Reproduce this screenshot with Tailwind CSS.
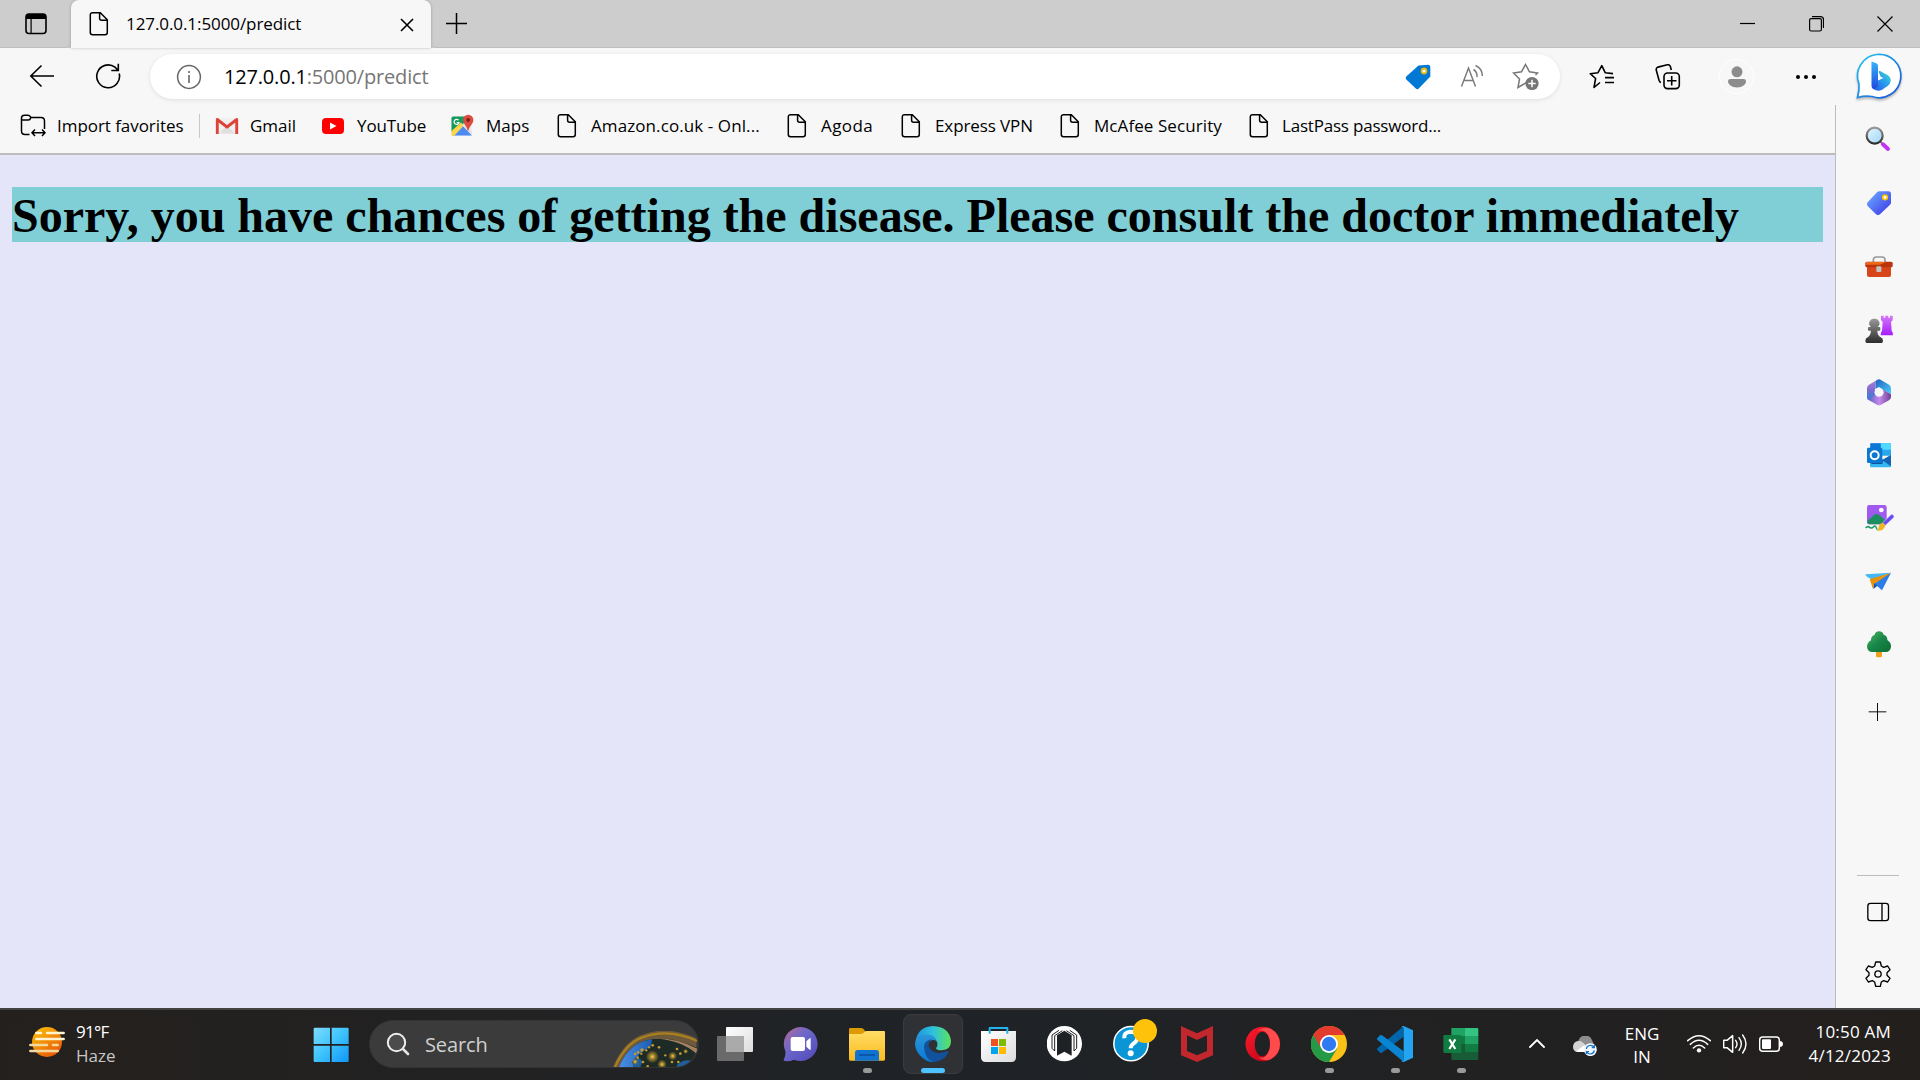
<!DOCTYPE html>
<html lang="en">
<head>
<meta charset="utf-8">
<title>127.0.0.1:5000/predict</title>
<script src="https://cdn.jsdelivr.net/npm/@tailwindcss/browser@4"></script>
</head>
<body class="w-[1920px] h-[1080px] overflow-hidden bg-[#f7f7f7] font-['Open_Sans',sans-serif] text-[17px] text-black flex flex-col whitespace-nowrap">

<svg class="hidden">
  <symbol id="file" viewBox="0 0 24 26"><path d="M5.500 1.700h7.800l7 7v12.800a2.200 2.200 0 0 1-2.200 2.200H5.500a2.200 2.200 0 0 1-2.200-2.200V3.900a2.200 2.200 0 0 1 2.200-2.200zM12.600 1.900v5.300a2 2 0 0 0 2 2h5.500" fill="none" stroke="#000" stroke-width="1.500"/></symbol>
</svg>

<!-- Title bar -->
<header class="h-12 shrink-0 bg-[#cdcdcd] flex">
  <div class="w-[71px] flex items-center justify-center border-b border-[#bdbdbd] rounded-br-md">
    <svg width="22" height="22" viewBox="0 0 22 22"><rect x="1" y="1" width="20" height="19.500" rx="3" fill="none" stroke="#000" stroke-width="1.600"/><path d="M1 6V4a3 3 0 0 1 3-3h14a3 3 0 0 1 3 3v2zM5.500 6v14h1.200V6z"/></svg>
  </div>
  <div class="w-[360px] bg-[#f7f7f7] rounded-t-lg flex items-center shadow-[0_0_3px_rgba(0,0,0,0.25)]">
    <svg class="ml-4 shrink-0" width="24" height="26"><use href="#file"/></svg>
    <span class="ml-[15px] w-[273px] tracking-[-0.08px]">127.0.0.1:5000/predict</span>
    <svg width="16" height="16" viewBox="0 0 16 16"><path d="M2 3l12 12M14 3L2 15" stroke="#000" stroke-width="1.600"/></svg>
  </div>
  <div class="flex-1 flex items-center border-b border-[#bdbdbd] rounded-bl-md">
    <svg class="ml-[15px]" width="21" height="21" viewBox="0 0 21 21"><path d="M10.500 0v21M0 10.500h21" stroke="#000" stroke-width="1.500"/></svg>
    <div class="flex-1"></div>
    <svg class="mr-[54px]" width="15" height="15"><path d="M0 7.500h15" stroke="#000" stroke-width="1.200"/></svg>
    <svg class="mr-[53px]" width="15" height="16" viewBox="0 0 15 16"><rect x=".6" y="2.600" width="11.800" height="12.400" rx="1.500" fill="none" stroke="#000" stroke-width="1.200"/><path d="M3 .7h8.500a3 3 0 0 1 3 3V12" fill="none" stroke="#000" stroke-width="1.200"/></svg>
    <svg class="mr-[27px]" width="16" height="16"><path d="M.5.500l15 15M15.500.500l-15 15" stroke="#000" stroke-width="1.200"/></svg>
  </div>
</header>

<!-- Toolbar -->
<nav class="h-[57px] shrink-0 flex items-start pt-1.5">
  <div class="h-[43px] w-[150px] flex items-center pl-[29px] gap-10">
    <svg width="26" height="24" viewBox="0 0 26 24"><path d="M25 12H2M12.500 1.500L1.800 12l10.700 10.500" fill="none" stroke="#000" stroke-width="1.600"/></svg>
    <svg width="26" height="26" viewBox="0 0 26 26"><path d="M24.200 10.500A11.400 11.400 0 1 1 20 4.200l3 3M23.300.8v6.700h-7" fill="none" stroke="#000" stroke-width="1.600"/></svg>
  </div>
  <div class="w-[1410px] h-[45px] rounded-full bg-white flex items-center shadow-[0_1px_4px_rgba(0,0,0,0.10)]">
    <svg class="ml-[26px]" width="26" height="26" viewBox="0 0 26 26"><circle cx="13" cy="13" r="11.400" fill="none" stroke="#666" stroke-width="1.500"/><path d="M13 11v8M13 7v2" stroke="#666" stroke-width="1.600"/></svg>
    <div class="ml-[22px] text-[20px] tracking-[-0.18px]"><span>127.0.0.1</span><span class="text-[#767676]">:5000/predict</span></div>
    <div class="flex-1"></div>
    <svg class="mr-[29px]" width="26" height="26" viewBox="0 0 26 26"><path d="M13.500 1.500L23 .8q2.300 0 2.300 2.200v9.500L13.800 24.500q-1.500 1.300-3 0L1.300 15.500q-1.300-1.500 0-3z" fill="#0078d4"/><circle cx="19" cy="7" r="2.500" fill="#fff" stroke="#e8b50c" stroke-width="1.800"/></svg>
    <svg class="mr-[26px]" width="26" height="26" viewBox="0 0 26 26"><path d="M1.500 22.500L8.500 4l7 18.500M4 16.500h9M13.500 5.500q4 2.500 3.500 7.500M15.500 1.500q7 3 6.800 10.500" fill="none" stroke="#7b7b7b" stroke-width="1.500"/></svg>
    <svg class="mr-[20px]" width="28" height="28" viewBox="0 0 28 28"><path d="M14.500 19.500L6 24.500l1.500-8.500L1.500 10l8-1.200L13.500 1.500l4 7.300 8 1.200-2 2" fill="none" stroke="#767676" stroke-width="1.500"/><circle cx="20" cy="20.500" r="6.600" fill="#767676"/><path d="M20 16.800v7.400M16.300 20.500h7.400" stroke="#fff" stroke-width="1.500"/></svg>
  </div>
  <div class="h-[45px] flex items-center pl-[29px]">
    <svg width="26" height="26" viewBox="0 0 26 26"><path d="M11 18.500L5 23.500l1.600-9L1.200 9.700l7.800-1L12.800 1.700l3.400 7L24 9.600M16 13.600h9M16 18.500h9" fill="none" stroke="#000" stroke-width="1.600" stroke-linejoin="round"/></svg>
    <svg class="ml-[40px]" width="26" height="26" viewBox="0 0 26 26"><rect x="9" y="9" width="15.300" height="15.600" rx="3.500" fill="none" stroke="#000" stroke-width="1.600"/><path d="M16.700 12v9.500M12 16.700h9.500M6 18.500q-1.300-.3-1.900-2L1.300 6.300Q.8 3.800 3 3.100l9.300-2.300q2.200-.4 3 1.500l1 3.700" fill="none" stroke="#000" stroke-width="1.600"/></svg>
    <div class="ml-[38px] size-[35px] rounded-full border border-white flex items-center justify-center">
      <svg width="20" height="22" viewBox="0 0 20 22"><circle cx="10" cy="5.800" r="5.500" fill="#8c8c8c"/><path d="M3.500 13h13q2.500 0 2.500 2.300c0 3-3.500 6.200-9 6.200s-9-3.200-9-6.200Q1 13 3.500 13z" fill="#8c8c8c"/></svg>
    </div>
    <svg class="ml-[41px]" width="22" height="6" viewBox="0 0 22 6"><circle cx="3" cy="3" r="2"/><circle cx="11" cy="3" r="2"/><circle cx="19" cy="3" r="2"/></svg>
    <svg class="ml-[39px] mb-0.5 overflow-visible drop-shadow-[0_2px_1px_rgba(0,0,0,0.25)]" width="46" height="46" viewBox="0 0 46 46">
      <defs><linearGradient id="b1" x1="0" y1="0" x2="1" y2="1"><stop offset="0" stop-color="#21c8ee"/><stop offset="1" stop-color="#1b50d8"/></linearGradient><linearGradient id="b2" x1="0" y1="0" x2="0" y2="1"><stop offset="0" stop-color="#35b5f8"/><stop offset="1" stop-color="#1d45dd"/></linearGradient><linearGradient id="b3" x1="0" y1="1" x2="1" y2="0"><stop offset="0" stop-color="#2354e8"/><stop offset=".6" stop-color="#2aa5ee"/><stop offset="1" stop-color="#4be0c0"/></linearGradient></defs>
      <path d="M1.500 44.500Q3.500 37 3 31A21.700 21.700 0 1 1 16 43.500Q9 42.500 1.500 44.500z" fill="#fff" stroke="url(#b1)" stroke-width="1.700"/>
      <path d="M16.500 35V30l11-5-2.800-1.200-2-4.800q-.3-1.500 1.300-.9l7.500 4q3.500 2 3.200 6-.4 3-3 5l-6 3.800q-5.200 2.300-9.200-1.900z" fill="url(#b3)"/>
      <path d="M15.500 8.500l4.800 1.700q1.700.6 1.700 2.500v20l-4 3.800q-2.500-.8-2.500-3.500z" fill="url(#b2)"/>
    </svg>
  </div>
</nav>

<div class="h-[903px] shrink-0 flex">
  <main class="w-[1835px] flex flex-col">
    <!-- Favorites bar -->
    <div class="h-[50px] shrink-0 border-b-2 border-[#bcbcbc] flex items-center pl-5 pb-1.5">
      <div class="flex items-center w-[179px]">
        <svg class="mr-[11px]" width="26" height="26" viewBox="0 0 26 26"><path d="M9.500 21.500H5q-3.500 0-3.500-3.500V5q0-2.800 3-2.800h3.500q1.500 0 2.200 1.300L11 4.500h10q3.500 0 3.500 3.500v8M1.500 7h6.700q2 0 2.500-2M15 16.500l-3 3.300 3 3.300M22 16.500l3 3.300-3 3.300M12 19.800h13" fill="none" stroke="#000" stroke-width="1.500"/></svg>
        <span class="tracking-[-0.05px]">Import favorites</span>
      </div>
      <div class="w-4 h-6 border-l border-[#c8c8c8]"></div>
      <div class="flex items-center gap-[11px] w-[106px]">
        <svg width="24" height="24" viewBox="0 0 24 24"><path d="M3 4h18v16H3z" fill="#f0f0f0"/><path d="M4 19.500L12 11l8 8.500z" fill="#e0e0e0"/><path d="M2.300 20V5.500L12 13l9.700-7.500V20" fill="none" stroke="#db4437" stroke-width="2.900" stroke-linejoin="round"/></svg>
        <span>Gmail</span></div>
      <div class="flex items-center gap-3 w-[129px]">
        <svg width="24" height="24" viewBox="0 0 24 24"><rect x="1" y="4" width="22" height="16" rx="4" fill="#f00"/><path d="M9 8.500v7l6.500-3.500z" fill="#fff"/></svg>
        <span class="tracking-[-0.1px]">YouTube</span></div>
      <div class="flex items-center gap-3 w-[105px]">
        <svg width="24" height="24" viewBox="0 0 24 24"><rect x="1.500" y="2.500" width="20" height="19.500" rx="1.500" fill="#e8eaed"/><path d="M1.500 18V4q0-1.500 1.500-1.500h12v6z" fill="#149a5b"/><path d="M2 21.500L12 11l10 10.500z" fill="#4a8af4"/><path d="M1.500 17L11 8.500l3 3L4 22H3q-1.500 0-1.500-1.500z" fill="#fdd44a"/><path d="M12 11l3-2 7 9v3.500z" fill="#dfe1e5"/><path d="M18 17.500q-1-4.500-3.500-7.500Q13 8 13 6a5.200 5.200 0 0 1 10.400 0q0 2-1.500 4-2.900 3.500-3.900 7.500z" fill="#dd4b3e"/><circle cx="18.200" cy="6" r="1.900" fill="#7b2019"/><path d="M8.500 6.200A2.500 2.500 0 1 0 9 8.500H6.700" fill="none" stroke="#fff" stroke-width="1.200"/></svg>
        <span>Maps</span></div>
      <div class="flex items-center gap-3 w-[230px]"><svg width="24" height="26"><use href="#file"/></svg><span class="tracking-[0.09px]">Amazon.co.uk - Onl...</span></div>
      <div class="flex items-center gap-3 w-[114px]"><svg width="24" height="26"><use href="#file"/></svg><span class="tracking-[0.4px]">Agoda</span></div>
      <div class="flex items-center gap-3 w-[159px]"><svg width="24" height="26"><use href="#file"/></svg><span class="tracking-[-0.1px]">Express VPN</span></div>
      <div class="flex items-center gap-3 w-[189px]"><svg width="24" height="26"><use href="#file"/></svg><span class="tracking-[0.08px]">McAfee Security</span></div>
      <div class="flex items-center gap-[11px]"><svg width="24" height="26"><use href="#file"/></svg><span class="tracking-[-0.2px]">LastPass password...</span></div>
    </div>
    <!-- Page content -->
    <section class="flex-1 bg-[#e5e5fa] px-3 pt-8">
      <h1 class="h-[55px] bg-[#80ced6] font-['Liberation_Serif',serif] font-bold text-[48px] leading-[57px]">Sorry, you have chances of getting the disease. Please consult the doctor immediately</h1>
    </section>
  </main>

  <!-- Sidebar -->
  <aside class="w-[85px] border-l border-[#bcbcbc] pt-0.5 flex flex-col items-center">
    <svg width="0" height="0" class="absolute"><defs>
      <linearGradient id="s1" x1="0" y1="0" x2="1" y2="1"><stop offset="0" stop-color="#6eb4ff"/><stop offset="1" stop-color="#3a30e8"/></linearGradient>
      <linearGradient id="s2" x1="0" y1="0" x2="0" y2="1"><stop offset="0" stop-color="#d478f5"/><stop offset="1" stop-color="#a61cff"/></linearGradient>
      <linearGradient id="s3" x1="0" y1="0" x2="0" y2="1"><stop offset="0" stop-color="#999"/><stop offset="1" stop-color="#2c2c2c"/></linearGradient>
      <linearGradient id="s4" x1="0" y1="0" x2="1" y2="1"><stop offset="0" stop-color="#e9f6ff"/><stop offset="1" stop-color="#9ad4f5"/></linearGradient>
      <linearGradient id="s5" x1="0" y1="0" x2="1" y2="1"><stop offset="0" stop-color="#4db85a"/><stop offset=".5" stop-color="#18864a"/><stop offset="1" stop-color="#0c6e30"/></linearGradient>
      <linearGradient id="s6" x1="0" y1="0" x2="0" y2="1"><stop offset="0" stop-color="#b57bd8"/><stop offset=".5" stop-color="#7d6bd0"/><stop offset="1" stop-color="#2b82d8"/></linearGradient>
      <linearGradient id="s7" x1="0" y1="0" x2="1" y2="1"><stop offset="0" stop-color="#1e5fc0"/><stop offset="1" stop-color="#4fd0fa"/></linearGradient>
      <linearGradient id="s8" x1="0" y1="0" x2="1" y2="0"><stop offset="0" stop-color="#5c62c4"/><stop offset=".5" stop-color="#c58bea"/><stop offset="1" stop-color="#6d3f96"/></linearGradient>
    </defs></svg>
    <div class="h-[63px] flex items-center"><svg class="overflow-visible" width="30" height="30" viewBox="129 72 90 90"><path d="M181 125l8 8" stroke="#777" stroke-width="6"/><path d="M189 133l15 14" stroke="#c233f5" stroke-width="12" stroke-linecap="round"/><circle cx="164" cy="107" r="24" fill="url(#s4)" stroke="url(#s3)" stroke-width="6.500"/></svg></div>
    <div class="h-[63px] flex items-center"><svg class="overflow-visible" width="30" height="30" viewBox="129 260 90 90"><path d="M178 273h27q8 0 8 8v26q0 3-3 6l-30 29q-6 5-12 0l-25-25q-5-6 0-11l28-30q3-3 7-3z" fill="url(#s1)"/><circle cx="195" cy="291" r="7" fill="#fff" stroke="#f5c400" stroke-width="5"/></svg></div>
    <div class="h-[63px] flex items-center"><svg class="overflow-visible" width="30" height="30" viewBox="129 449 90 90"><path d="M160 488v-9q0-9 9-9h17q9 0 9 9v9" fill="none" stroke="#999" stroke-width="5"/><path d="M141 495h72v29q0 6-6 6h-60q-6 0-6-6z" fill="#d9451a"/><path d="M141 484h72q5 0 5 5v8q0 4-5 4h-72q-5 0-5-4v-8q0-5 5-5z" fill="#b9340c"/><path d="M139 485h60l-20 8h-42z" fill="#ef6a18"/><rect x="169" y="498" width="15" height="17" rx="3" fill="#c3c3c3"/></svg></div>
    <div class="h-[63px] flex items-center"><svg class="overflow-visible" width="30" height="30" viewBox="129 638 90 90"><path d="M183 646h8v6h5v-6h9v6h5v-6h8v14l-5 4 2 27q4 3 4 14h-37q0-11 4-14l2-27-5-4z" fill="url(#s2)"/><path d="M163 655a14 14 0 0 1 10 25h6q2 0 2 3v5q0 3-3 3h-6q0 14 10 20 7 2 7 10 0 7-5 7h-43q-5 0-5-7 0-8 7-10 9-6 10-20h-6q-3 0-3-3v-5q0-3 3-3h6a14 14 0 0 1 10-25z" fill="url(#s3)"/></svg></div>
    <div class="h-[63px] flex items-center"><svg class="overflow-visible" width="30" height="30" viewBox="129 827 90 90"><path d="M171 839l-24 14q-6 4-6 11v28q0 4 3 7l24-14-3-15V846z" fill="url(#s6)"/><path d="M171 839q6-4 12 0l24 14q6 4 6 11v18l-24-13-12-9-11 6v-20q0-5 5-7z" fill="url(#s7)"/><path d="M189 868l24 14v8q0 6-6 10l-24 13q-6 3-12 0l-24-13-3-3 22-13 11 4 13-8z" fill="url(#s8)"/><circle cx="177" cy="876" r="13.500" fill="#f7f7f7"/></svg></div>
    <div class="h-[63px] flex items-center"><svg class="overflow-visible" width="30" height="30" viewBox="129 56 90 90"><path d="M154 69h56q3 0 3 3v34h-62V72q0-3 3-3z" fill="#28a8ea"/><path d="M182 69h28q3 0 3 3v16h-31z" fill="#50d9ff"/><path d="M151 69h31v19h-31z" fill="#0f78d4"/><path d="M150 104l32 20 31-20v34q0 3-3 3h-57q-3 0-3-3z" fill="#35b8f1"/><path d="M213 104v34l-27-19z" fill="#1464b4"/><path d="M190 119l-36-20v32h33z" fill="#13509a"/><rect x="141" y="82" width="46" height="46" rx="4" fill="#0a78d2"/><circle cx="164" cy="105" r="12" fill="none" stroke="#fff" stroke-width="6"/></svg></div>
    <div class="h-[63px] flex items-center"><svg class="overflow-visible" width="30" height="30" viewBox="129 245 90 90"><path d="M147 254h46q7 0 7 7v45q0 6-7 6h-46q-6 0-6-6v-45q0-7 6-7z" fill="#a05af0"/><path d="M142 302l20-18q8-6 16 0l20 17q-4 11-10 11h-41q-5-2-5-10z" fill="#1c8f60"/><circle cx="184" cy="269" r="7" fill="#fff"/><path d="M137 323q6-7 12-2t12-2 10 9" fill="none" stroke="#1c9a68" stroke-width="4.500"/><path d="M187 308l25-24q4-4 8 0t1 8l-26 24z" fill="#6a4bf2" stroke="#f7f7f7" stroke-width="1.500"/><path d="M170 331q6-4 6-12 3-12 13-11 9 3 5 13-7 13-24 10z" fill="#f0b429"/></svg></div>
    <div class="h-[63px] flex items-center"><svg class="overflow-visible" width="30" height="30" viewBox="129 434 90 90"><path d="M213 457l-27 53-15-13-10 8-5-20z" fill="#2d7de8"/><path d="M213 457l-77 5q1 8 22 16z" fill="#45b8f5"/><path d="M213 457l-64 20 10 29 5-16z" fill="#e8930c"/><path d="M163 488l-2 17 10-9z" fill="#1b4fb5"/></svg></div>
    <div class="h-[63px] flex items-center"><svg class="overflow-visible" width="30" height="30" viewBox="129 623 90 90"><path d="M168 690h18v16q0 5-5 5h-8q-5 0-5-5z" fill="#f0a01c"/><path d="M177 633q10 0 14 10 12 4 11 16 12 8 11 20-2 16-16 16h-40q-15-1-16-16 0-12 12-19-1-12 11-17 3-10 13-10z" fill="url(#s5)"/></svg></div>
    <div class="h-[75px] flex items-center"><svg width="30" height="30" viewBox="129 831 90 90"><path d="M172.500 849v54M146 875.500h53" stroke="#111" stroke-width="3"/></svg></div>
    <div class="mt-auto w-[42px] h-px bg-[#bcbcbc] shrink-0"></div>
    <div class="h-[67px] pt-1 flex items-center shrink-0"><svg width="30" height="30" viewBox="129 166 90 90"><rect x="143.500" y="185" width="62" height="52" rx="8" fill="none" stroke="#000" stroke-width="4"/><path d="M186 185v52" stroke="#000" stroke-width="4"/></svg></div>
    <div class="h-[65px] flex items-start pt-4 shrink-0"><svg width="30" height="30" viewBox="129 355 90 90"><path d="M167 364h14l3 12 7 4 12-4 7 11-9 9v8l9 9-7 11-12-4-7 4-3 13h-14l-3-13-7-4-12 4-7-11 9-9v-8l-9-9 7-11 12 4 7-4z" fill="none" stroke="#000" stroke-width="4" stroke-linejoin="round"/><circle cx="174" cy="400" r="9.500" fill="none" stroke="#000" stroke-width="4"/></svg></div>
  </aside>
</div>

<!-- Taskbar -->
<footer class="h-[72px] shrink-0 border-t-2 border-[#434343] bg-linear-to-r from-[#24201d] via-[#1f2327] to-[#231f1d] flex text-white">
  <svg width="0" height="0" class="absolute"><defs>
    <linearGradient id="t1" x1="0" y1="0" x2=".7" y2="1"><stop offset="0" stop-color="#fbc70a"/><stop offset="1" stop-color="#ea5a05"/></linearGradient>
    <linearGradient id="t2" gradientUnits="userSpaceOnUse" x1="942" y1="83" x2="1047" y2="186"><stop offset="0" stop-color="#7fdcff"/><stop offset=".5" stop-color="#3dc3fb"/><stop offset="1" stop-color="#1095f8"/></linearGradient>
    <linearGradient id="t3" x1="0" y1="0" x2="1" y2="1"><stop offset="0" stop-color="#b7688f"/><stop offset=".4" stop-color="#6d68ca"/><stop offset="1" stop-color="#5048b8"/></linearGradient>
    <linearGradient id="t4" x1="0" y1="0" x2="0" y2="1"><stop offset="0" stop-color="#ffdd66"/><stop offset="1" stop-color="#fbbb20"/></linearGradient>
    <linearGradient id="t5" x1="0" y1="0" x2="1" y2="0"><stop offset="0" stop-color="#1b95dd"/><stop offset=".5" stop-color="#2fc2dd"/><stop offset="1" stop-color="#5be35a"/></linearGradient>
    <linearGradient id="t6" x1="0" y1="0" x2="0" y2="1"><stop offset="0" stop-color="#2a96d8"/><stop offset="1" stop-color="#0a78d8"/></linearGradient>
    <linearGradient id="t7" x1="0" y1="0" x2="1" y2="1"><stop offset="0" stop-color="#ff1b2d"/><stop offset="1" stop-color="#b00012"/></linearGradient>
    <linearGradient id="t8" x1="0" y1="0" x2="1" y2="1"><stop offset="0" stop-color="#fff"/><stop offset="1" stop-color="#dcdcdc"/></linearGradient>
    <linearGradient id="t9" x1="0" y1="0" x2="1" y2="0"><stop offset="0" stop-color="#4a8fe8"/><stop offset="1" stop-color="#1c5cae"/></linearGradient>
    <radialGradient id="ta"><stop offset="0" stop-color="#ffd24a"/><stop offset="1" stop-color="#8a6a18" stop-opacity="0.300"/></radialGradient>
  </defs></svg>
  <div class="w-[298px] flex pl-[29px]">
    <svg class="mt-4" width="36" height="32" viewBox="87 78 108 96"><circle cx="141" cy="126" r="45" fill="url(#t1)"/><path d="M109 99h14M141 99h50M109 117h82" stroke="#fff3d0" stroke-width="7.500" stroke-linecap="round"/><path d="M91 135h50M159 135h14M91 153h82" stroke="#f3d9a0" stroke-width="7.500" stroke-linecap="round"/></svg>
    <div class="ml-[11px] pt-2.5 leading-6"><div class="tracking-[-0.7px]">91°F</div><div class="text-[#c8c6c5]">Haze</div></div>
  </div>
  <div class="w-[66px] pt-4 flex justify-center"><svg width="36" height="36" viewBox="940 78 108 108"><path d="M945 83h46v49h-49V86q0-3 3-3zM996 83h48q3 0 3 3v46h-51zM942 137h49v49h-46q-3 0-3-3zM996 137h51v46q0 3-3 3h-48z" fill="url(#t2)"/></svg></div>
  <div class="ml-[5px] mt-2.5 w-[330px] h-12 rounded-full bg-[#3b3b3b] border border-[#343434] flex items-center overflow-hidden shrink-0">
    <svg class="ml-4" width="24" height="24" viewBox="0 0 24 24"><circle cx="10.500" cy="10.500" r="8.700" fill="#4c4c4c" stroke="#eee" stroke-width="2"/><path d="M17 17l5 5" stroke="#e4e4e4" stroke-width="2.600" stroke-linecap="round"/></svg>
    <span class="ml-[15px] mt-0.5 text-[20px] tracking-[-0.1px] text-[#d0d0d0]">Search</span>
    <svg class="ml-auto mt-[9px]" width="86" height="36" viewBox="755 88 258 108">
      <path d="M758 196q30-72 80-94 80-34 170 8v86z" fill="#6e5a3a"/><path d="M764 196q30-68 80-88 80-30 166 10" fill="none" stroke="#a9801f" stroke-width="7"/>
      <path d="M776 196q26-62 76-78 70-22 161 22v56z" fill="#1d2a26"/><path d="M776 196q26-62 76-78l24-6-4 22-32 20-24 26 4 16z" fill="url(#t9)"/><path d="M876 110q70-4 137 32v18q-50-46-137-50z" fill="#a58160"/>
      <path d="M820 180q14-20 26 0l-6 16h-22zM950 190q20-20 45-12l-15 18h-30z" fill="#1f5f9e"/>
      <g fill="url(#ta)"><circle cx="876" cy="165" r="18"/><circle cx="937" cy="163" r="12"/><circle cx="905" cy="188" r="13"/><circle cx="824" cy="180" r="9"/><circle cx="976" cy="149" r="7"/></g>
      <g fill="#c79a2c"><circle cx="845" cy="145" r="5"/><circle cx="858" cy="146" r="3.500"/><circle cx="866" cy="137" r="3.500"/><circle cx="877" cy="131" r="4"/><circle cx="833" cy="152" r="4"/><circle cx="824" cy="157" r="4"/><circle cx="843" cy="156" r="3.500"/><circle cx="832" cy="168" r="4"/><circle cx="848" cy="181" r="4"/><circle cx="896" cy="137" r="4"/><circle cx="950" cy="142" r="4"/><circle cx="960" cy="156" r="4"/><circle cx="915" cy="161" r="3.500"/><circle cx="935" cy="181" r="4"/><circle cx="954" cy="181" r="4"/><circle cx="862" cy="194" r="4"/></g>
    </svg>
  </div>
  <div class="ml-[3px] flex shrink-0">
    <div class="w-[66px] pt-4 flex flex-col items-center"><svg width="36" height="36" viewBox="51 78 108 108"><rect x="51" y="108" width="81" height="75" rx="3" fill="#6a6a6a"/><rect x="78" y="81" width="81" height="75" rx="3" fill="url(#t8)"/><path d="M78 108h54v48H81q-3 0-3-3z" fill="#aaa"/></svg></div>
    <div class="w-[66px] pt-4 flex flex-col items-center"><svg width="36" height="36" viewBox="247 78 108 108"><path d="M300 81a51 51 0 1 1-20 98q-14 6-27 4-6 0-3-6 6-12 4-24A51 51 0 0 1 300 81z" fill="url(#t3)"/><rect x="270" y="111" width="43" height="42" rx="6" fill="#fff"/><path d="M317 124l10-9q3-2 3 2v30q0 4-3 2l-10-9z" fill="#fff"/></svg></div>
    <div class="w-[66px] pt-4 flex flex-col items-center"><svg width="36" height="36" viewBox="447 78 108 108"><path d="M447 88q0-4 4-4h32q4 0 8 4l8 10-20 12h-32z" fill="#dc9b05"/><path d="M447 102h34q6 0 10-4l5-4q2-1 5-1h51q3 0 3 3v82q0 4-4 4H451q-4 0-4-4z" fill="url(#t4)"/><path d="M465 182v-24q0-8 8-8h56q8 0 8 8v24z" fill="#0f73cf"/><path d="M479 165h44" stroke="#0a4f9a" stroke-width="4" stroke-linecap="round"/></svg><div class="mt-1.5 w-[9px] h-[5px] rounded-full bg-[#9a9a9a]"></div></div>
    <div class="w-[66px] pt-1 flex justify-center"><div class="w-[60px] h-[60px] rounded-lg bg-[#2f3135] border border-[#3b3c40] pt-[11px] flex flex-col items-center"><svg width="36" height="36" viewBox="645 78 108 108"><path d="M647 124q6-44 52-46 50 2 54 46 0 26-28 27-16 0-17-6 6-6 4-17-5-14-28-19-26 0-37 15z" fill="url(#t5)"/><path d="M645 132q0-26 28-29 34-1 38 24-2-8-12-7-15 1-15 18 0 22 22 40 2 6-2 8-20 2-36-12-22-18-23-42z" fill="url(#t6)"/><path d="M672 140q2-20 24-22-14 8-9 23 8 17 28 18 14 0 26-5 6-2 4 4-14 26-44 28-28-10-29-46z" fill="#12529c"/></svg><div class="mt-1.5 w-6 h-[5px] shrink-0 rounded-full bg-[#4cc2ff]"></div></div></div>
    <div class="w-[66px] pt-4 flex flex-col items-center"><svg width="36" height="36" viewBox="843 78 108 108"><path d="M843 93h105v79q0 14-14 14h-77q-14 0-14-14z" fill="url(#t8)"/><path d="M869 101V84h53v17" fill="none" stroke="#1fb4ee" stroke-width="6" stroke-linejoin="round"/><path d="M873 117h21v21h-21z" fill="#f25022"/><path d="M897 117h21v21h-21z" fill="#7fba00"/><path d="M873 141h21v21h-21z" fill="#00a4ef"/><path d="M897 141h21v21h-21z" fill="#ffb900"/></svg></div>
    <div class="w-[66px] pt-4 flex flex-col items-center"><svg width="36" height="36" viewBox="1041 78 108 108"><circle cx="1093" cy="131" r="53" fill="#fff"/><path d="M1093 92l22 14v61l-22-12-22 12v-61z" fill="#1f2225"/><path d="M1087 92l-23 15v46l-8-8v-40l21-14M1099 92l23 15v46l8-8v-40l-21-14" fill="none" stroke="#1f2225" stroke-width="3"/></svg></div>
    <div class="w-[66px] pt-4 flex flex-col items-center"><svg class="overflow-visible" width="36" height="36" viewBox="99 78 108 108"><circle cx="153" cy="131" r="51.500" fill="#0a96d6" stroke="#fff" stroke-width="4.500"/><path d="M133 115q-2-18 17-20 22 0 22 18 0 10-11 17-9 6-9 15" fill="none" stroke="#fff" stroke-width="12"/><circle cx="152" cy="160" r="9" fill="#fff"/><circle cx="195" cy="93" r="36" fill="#ffc20a"/></svg></div>
    <div class="w-[66px] pt-4 flex flex-col items-center"><svg width="36" height="36" viewBox="297 78 108 108"><path d="M303 78l48 22 48-22v88l-48 20-48-20zM321 106v47l30 13 30-13v-47l-30 14z" fill="#c1272d" fill-rule="evenodd"/></svg></div>
    <div class="w-[66px] pt-4 flex flex-col items-center"><svg width="36" height="36" viewBox="495 78 108 108"><circle cx="548.500" cy="132" r="52" fill="url(#t7)"/><path d="M530 95q20-18 42-9 28 16 28 46t-28 46q-20 8-42-9 14 10 28-2 12-14 12-35t-12-35q-14-12-28-2z" fill="#ff4b4b"/><ellipse cx="547" cy="132" rx="23" ry="37" fill="#202326"/></svg></div>
    <div class="w-[66px] pt-4 flex flex-col items-center"><svg width="36" height="36" viewBox="693 78 108 108"><circle cx="747" cy="132" r="54" fill="#fbc116"/><path d="M747 132L700 105A54 54 0 0 0 747 186l24-40z" fill="#249a46"/><path d="M747 105h47A54 54 0 0 0 700 105l24 40z" fill="#e33b2e"/><circle cx="747" cy="132" r="27" fill="#fff"/><circle cx="747" cy="132" r="21.500" fill="#2f7af0"/></svg><div class="mt-1.5 w-[9px] h-[5px] rounded-full bg-[#9a9a9a]"></div></div>
    <div class="w-[66px] pt-4 flex flex-col items-center"><svg width="36" height="36" viewBox="891 78 108 108"><path d="M971 78v32l-66 49q-3 1-5-1l-8-8q-2-3 0-5z" fill="#0065a9"/><path d="M971 186v-32l-66-49q-3-1-5 1l-8 8q-2 3 0 5z" fill="#0a85d1"/><path d="M971 78l28 13v82l-28 13q-4 0-8-4 8 4 8-4V86q0-8-8-4 4-4 8-4z" fill="#23a5f2"/></svg><div class="mt-1.5 w-[9px] h-[5px] rounded-full bg-[#9a9a9a]"></div></div>
    <div class="w-[66px] pt-4 flex flex-col items-center"><svg width="36" height="36" viewBox="1088 78 108 108"><path d="M1113 84h41v24h-41z" fill="#21a366"/><path d="M1154 84h37q3 0 3 3v21h-40z" fill="#33c481"/><path d="M1113 108h41v24h-41z" fill="#107c41"/><path d="M1154 108h40v24h-40z" fill="#21a366"/><path d="M1113 132h41v48h-38q-3 0-3-3z" fill="#185c37"/><path d="M1154 132h40v24h-40z" fill="#107c41"/><path d="M1154 156h40v21q0 3-3 3h-37z" fill="#185c37"/><rect x="1089" y="105" width="54" height="54" rx="4" fill="#107c41"/><path d="M1107 118l18 29M1125 118l-18 29" stroke="#fff" stroke-width="6.500"/></svg><div class="mt-1.5 w-[9px] h-[5px] rounded-full bg-[#9a9a9a]"></div></div>
  </div>
  <div class="flex-1 flex items-start">
    <svg class="ml-[35px] mt-[29px]" width="16" height="9" viewBox="0 0 16 9"><path d="M1 8l7-7 7 7" fill="none" stroke="#fff" stroke-width="1.800" stroke-linecap="round"/></svg>
    <svg class="ml-7 mt-[26px]" width="24" height="20" viewBox="219 108 72 60"><path d="M235 122a22 22 0 0 1 42 0l6 14h-40z" fill="#8e8e8e"/><path d="M234 156q-15-1-15-16 1-15 16-17 9-1 16 7l12 10v16z" fill="#d4d4d4"/><path d="M228 154l25-18 10 20h-28z" fill="#fff"/><circle cx="271" cy="149" r="19.500" fill="#f4f8fc"/><path d="M259 147a12.500 12.500 0 0 1 23-5M283 151a12.500 12.500 0 0 1-23 5M283 135v8h-8M259 163v-8h8" fill="none" stroke="#1272c8" stroke-width="3.600"/></svg>
    <div class="w-[90px] pt-3 leading-[23px] text-center"><div>ENG</div><div>IN</div></div>
    <div class="flex gap-3 pt-6">
      <svg width="24" height="20" viewBox="561 102 72 60"><path d="M563 122q34-30 68 0M571 133q26-24 52 0M580 144q17-16 34 0" fill="none" stroke="#fff" stroke-width="4.500" stroke-linecap="round"/><circle cx="597" cy="151" r="6.500" fill="#fff"/></svg>
      <svg width="24" height="20" viewBox="669 102 72 60"><path d="M671 121h10l17-14v50l-17-14h-10z" fill="none" stroke="#fff" stroke-width="4.500" stroke-linejoin="round"/><path d="M707 121q8 11 0 22M717 113q14 19 0 38M728 105q20 27 0 54" fill="none" stroke="#fff" stroke-width="4.200" stroke-linecap="round"/></svg>
      <svg width="24" height="20" viewBox="777 102 72 60"><rect x="779" y="111" width="59" height="43" rx="9" fill="none" stroke="#fff" stroke-width="4.500"/><rect x="786" y="118" width="27" height="29" rx="3" fill="#fff"/><path d="M840 124h4q5 2 5 8t-5 8h-4z" fill="#fff"/></svg>
    </div>
    <div class="flex-1 pr-[29px] pt-2.5 leading-6 text-right tracking-[0.22px]"><div>10:50 AM</div><div>4/12/2023</div></div>
  </div>
</footer>
</body>
</html>
